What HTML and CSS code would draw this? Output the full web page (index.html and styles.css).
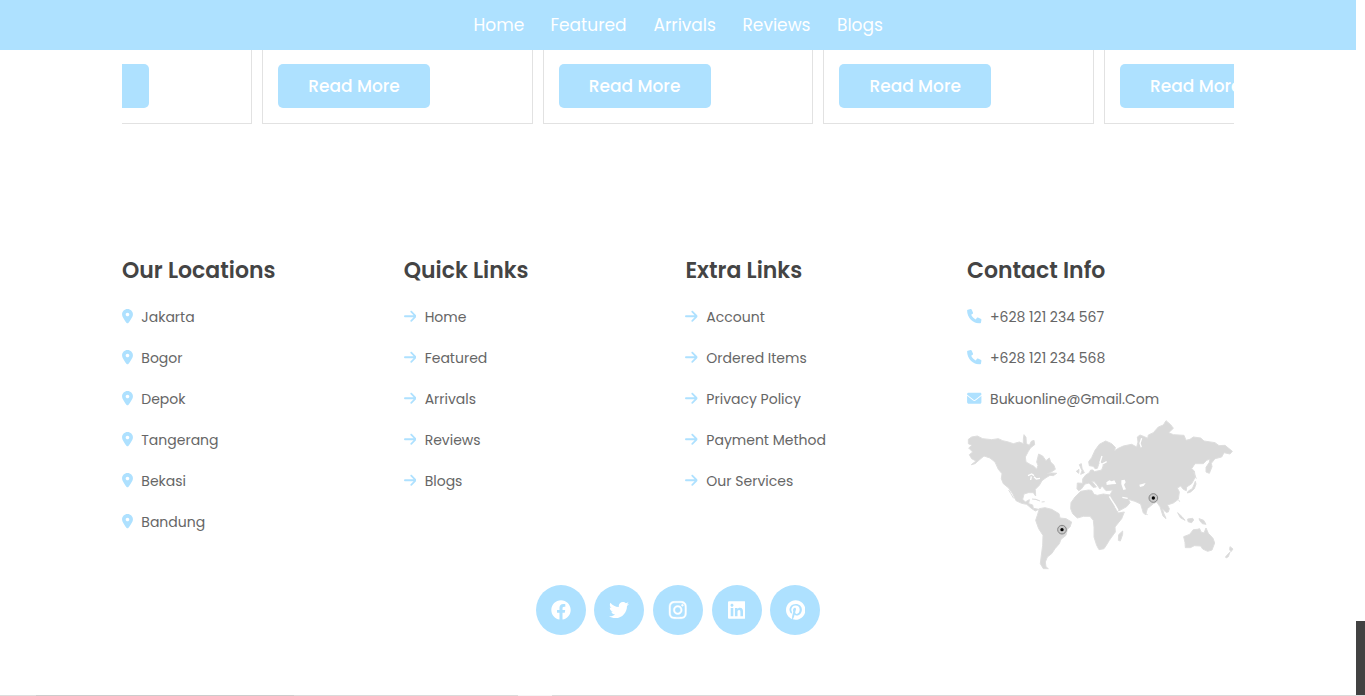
FILE: index.html
```html
<!DOCTYPE html>
<html lang="en">
<head>
<meta charset="utf-8">
<title>Bukuonline</title>
<link rel="stylesheet" href="styles.css">
</head>
<body>
<svg class="sprite" aria-hidden="true">
  <symbol id="pin" viewBox="0 0 384 512"><path d="M168.3 499.2C116.1 435 0 279.4 0 192C0 85.96 85.96 0 192 0C298 0 384 85.96 384 192C384 279.4 267 435 215.7 499.2C203.4 514.5 180.6 514.5 168.3 499.2zM192 256C227.3 256 256 227.3 256 192C256 156.7 227.3 128 192 128C156.7 128 128 156.7 128 192C128 227.3 156.7 256 192 256z"/></symbol>
  <symbol id="arrow" viewBox="0 0 448 512"><path d="M438.6 278.6l-160 160C272.4 444.9 264.2 448 256 448s-16.38-3.125-22.62-9.375c-12.5-12.5-12.5-32.75 0-45.25L338.8 288H32C14.33 288 0 273.7 0 256S14.33 224 32 224h306.8l-105.4-105.4c-12.5-12.5-12.5-32.75 0-45.25s32.75-12.5 45.25 0l160 160C451.1 245.9 451.1 266.1 438.6 278.6z"/></symbol>
  <symbol id="phone" viewBox="0 0 512 512"><path d="M511.2 387l-23.25 100.8c-3.266 14.25-15.79 24.22-30.46 24.22C205.2 512 0 306.8 0 54.5c0-14.66 9.969-27.2 24.22-30.45l100.8-23.25C139.7-2.602 154.7 5.018 160.8 18.92l46.52 108.5c5.438 12.78 1.77 27.67-8.98 36.45L144.5 207.1c33.98 69.22 90.26 125.5 159.5 159.5l44.08-53.8c8.688-10.78 23.69-14.51 36.47-8.975l108.5 46.51C506.1 357.2 514.6 372.4 511.2 387z"/></symbol>
  <symbol id="mail" viewBox="0 0 512 512"><path d="M256 352C239.5 352 223.5 346.5 210.5 336.1L0 167.1V384C0 419.3 28.65 448 64 448H448C483.3 448 512 419.3 512 384V167.1L301.5 336C288.5 346.5 272.5 352 256 352zM16.29 145.3L230.5 311.2C245.5 322.9 266.5 322.9 281.5 311.2L495.7 145.3C506 137.3 512 125 512 112C512 85.5 490.5 64 464 64H48C21.5 64 0 85.5 0 112C0 125 6 137.3 16.29 145.3z"/></symbol>
</svg>

<header class="navbar">
  <nav class="nav">
    <a>Home</a><a>Featured</a><a>Arrivals</a><a>Reviews</a><a>Blogs</a>
  </nav>
</header>

<section class="blogs">
  <div class="track">
    <article class="card"><a class="btn"></a></article>
    <article class="card"><a class="btn">Read More</a></article>
    <article class="card"><a class="btn">Read More</a></article>
    <article class="card"><a class="btn">Read More</a></article>
    <article class="card"><a class="btn">Read More</a></article>
  </div>
</section>

<footer class="footer">
  <div class="columns">
    <div class="col locations">
      <h3>Our Locations</h3>
      <a><svg class="w-pin"><use href="#pin"/></svg>Jakarta</a>
      <a><svg class="w-pin"><use href="#pin"/></svg>Bogor</a>
      <a><svg class="w-pin"><use href="#pin"/></svg>Depok</a>
      <a><svg class="w-pin"><use href="#pin"/></svg>Tangerang</a>
      <a><svg class="w-pin"><use href="#pin"/></svg>Bekasi</a>
      <a><svg class="w-pin"><use href="#pin"/></svg>Bandung</a>
    </div>
    <div class="col quick">
      <h3>Quick Links</h3>
      <a><svg class="w-arrow"><use href="#arrow"/></svg>Home</a>
      <a><svg class="w-arrow"><use href="#arrow"/></svg>Featured</a>
      <a><svg class="w-arrow"><use href="#arrow"/></svg>Arrivals</a>
      <a><svg class="w-arrow"><use href="#arrow"/></svg>Reviews</a>
      <a><svg class="w-arrow"><use href="#arrow"/></svg>Blogs</a>
    </div>
    <div class="col extra">
      <h3>Extra Links</h3>
      <a><svg class="w-arrow"><use href="#arrow"/></svg>Account</a>
      <a><svg class="w-arrow"><use href="#arrow"/></svg>Ordered Items</a>
      <a><svg class="w-arrow"><use href="#arrow"/></svg>Privacy Policy</a>
      <a><svg class="w-arrow"><use href="#arrow"/></svg>Payment Method</a>
      <a><svg class="w-arrow"><use href="#arrow"/></svg>Our Services</a>
    </div>
    <div class="col contact">
      <h3>Contact Info</h3>
      <a><svg class="w-phone"><use href="#phone"/></svg>+628 121 234 567</a>
      <a><svg class="w-phone"><use href="#phone"/></svg>+628 121 234 568</a>
      <a><svg class="w-phone"><use href="#mail"/></svg>Bukuonline@Gmail.Com</a>
      <svg class="map" viewBox="21 24 801 450">
        <g class="land">
          <path d="M25 82L35 75L52 72L68 80L95 83L115 80L128 86L145 90L160 95L178 90L190 95L190 82L192 68L198 76L199 95L208 100L214 88L222 85L224 98L212 107L205 118L196 135L198 150L212 158L222 163L230 172L234 160L230 150L236 126L248 132L258 146L268 138L272 150L282 160L286 172L275 179L262 185L275 183L290 184L280 191L270 190L258 197L246 206L238 220L226 232L227 252L220 242L205 242L192 246L188 262L196 270L208 263L206 275L218 279L220 289L236 292L226 297L214 289L200 277L185 274L168 266L158 245L146 228L130 215L124 200L126 185L115 172L105 150L90 138L72 132L60 142L45 155L34 158L48 147L35 140L28 128L38 120L26 108L36 100L25 95Z"/>
          <path d="M146 234L152 244L161 259M216 261L228 262L240 267M245 270L254 269"/>
          <path d="M238 290L255 287L275 292L297 305L300 318L318 320L335 330L330 345L322 352L318 370L303 382L298 395L285 410L275 425L262 435L256 450L258 465L265 470L250 470L241 455L244 430L248 400L249 370L236 350L227 325L232 310Z"/>
          <path d="M362 238L385 234L395 235L402 247L412 250L430 246L450 249L458 268L465 287L475 303L493 300L485 320L465 345L466 360L455 375L448 385L440 398L432 410L417 413L410 400L402 375L402 345L400 325L390 313L370 313L352 318L338 305L332 290L333 272L345 255Z"/>
          <path d="M476 368L488 357L488 367L481 387L475 385Z"/>
          <path d="M352 213L368 214L368 201L376 190L388 182L392 174L398 174L404 179L425 174L430 160L424 156L420 148L416 157L412 169L405 170L400 163L388 161L386 149L395 137L405 115L418 97L437 87L455 95L466 106L464 116L475 109L490 102L515 97L530 105L534 90L532 75L540 69L553 74L563 79L565 69L580 62L595 45L610 39L618 26L632 38L640 49L626 62L640 68L672 70L678 85L690 82L700 75L722 78L732 87L765 92L777 101L795 100L817 118L810 126L792 122L785 135L765 140L754 154L756 164L748 184L738 180L738 166L748 151L750 141L740 145L730 155L705 155L695 170L703 177L706 195L695 215L680 225L679 236L670 232L662 222L652 228L658 240L655 262L640 273L622 279L628 290L625 300L618 301L607 290L612 306L618 319L609 312L600 284L590 270L580 275L562 290L557 308L550 303L542 276L525 268L505 262L510 272L500 284L476 297L468 283L456 262L450 249L458 234L438 236L431 228L426 221L420 231L411 218L402 208L395 207L409 225L399 226L387 213L375 216L364 231L356 236L351 230Z"/>
          <path d="M358 158L364 155L366 169L373 182L362 187L366 176ZM349 178L357 172L356 184Z"/>
          <path d="M706 208L708 216L703 230L692 240L682 243L685 237L697 230L702 218Z"/>
          <path d="M700 180L709 200M656 264L659 269M608 304L617 320M653 302L666 314L675 325L661 317ZM683 321L698 319L701 324L695 332L684 329ZM717 320L731 325L738 337L727 335L720 327ZM558 306L563 308"/>
          <path d="M671 374L689 367L700 353L712 352L719 350L723 360L732 363L738 348L745 364L759 379L764 393L756 414L743 418L728 411L722 402L703 401L691 407L676 407L675 391Z"/>
          <path d="M810 404L819 411L813 419L809 413ZM797 434L810 420L805 434L798 438Z"/>
        </g>
        <g class="water">
          <path d="M439 211L448 205L455 208L463 205L469 216L456 217L440 219ZM484 205L494 203L497 211L492 218L498 232L490 234L484 217ZM538 218L557 213L551 222L540 225Z"/>
          <path d="M448 253L456 266L466 281L474 295M204 191L215 186L222 191M214 193L212 204M222 194L229 201L240 199M426 132L420 151L425 157L440 149M545 79L540 94L544 106M503 259L487 256"/>
        </g>
        <g class="marker"><circle class="ring" cx="306" cy="353" r="13"/><circle class="dot" cx="306" cy="353" r="5"/></g>
        <g class="marker"><circle class="ring" cx="580" cy="258" r="13"/><circle class="dot" cx="580" cy="258" r="5"/></g>
      </svg>
    </div>
  </div>
  <div class="social">
    <a><svg viewBox="0 0 512 512"><path d="M504 256C504 119 393 8 256 8S8 119 8 256c0 123.78 90.69 226.38 209.25 245V327.69h-63V256h63v-54.64c0-62.15 37-96.48 93.67-96.48 27.14 0 55.52 4.84 55.52 4.84v61h-31.28c-30.8 0-40.41 19.12-40.41 38.73V256h68.78l-11 71.69h-57.78V501C413.31 482.38 504 379.78 504 256z"/></svg></a>
    <a><svg viewBox="0 0 512 512"><path d="M459.37 151.716c.325 4.548.325 9.097.325 13.645 0 138.72-105.583 298.558-298.558 298.558-59.452 0-114.68-17.219-161.137-47.106 8.447.974 16.568 1.299 25.34 1.299 49.055 0 94.213-16.568 130.274-44.832-46.132-.975-84.792-31.188-98.112-72.772 6.498.974 12.995 1.624 19.818 1.624 9.421 0 18.843-1.3 27.614-3.573-48.081-9.747-84.143-51.98-84.143-102.985v-1.299c13.969 7.797 30.214 12.67 47.431 13.319-28.264-18.843-46.781-51.005-46.781-87.391 0-19.492 5.197-37.36 14.294-52.954 51.655 63.675 129.3 105.258 216.365 109.807-1.624-7.797-2.599-15.918-2.599-24.04 0-57.828 46.782-104.934 104.934-104.934 30.213 0 57.502 12.67 76.67 33.137 23.715-4.548 46.456-13.32 66.599-25.34-7.798 24.366-24.366 44.833-46.132 57.827 21.117-2.273 41.584-8.122 60.426-16.243-14.292 20.791-32.161 39.308-52.628 54.253z"/></svg></a>
    <a><svg class="bold" viewBox="0 0 448 512"><path d="M224.1 141c-63.6 0-114.9 51.3-114.9 114.9s51.3 114.9 114.9 114.9S339 319.5 339 255.9 287.7 141 224.1 141zm0 189.6c-41.1 0-74.7-33.5-74.7-74.7s33.5-74.7 74.7-74.7 74.7 33.5 74.7 74.7-33.6 74.7-74.7 74.7zm146.4-194.3c0 14.9-12 26.8-26.8 26.8-14.9 0-26.8-12-26.8-26.8s12-26.8 26.8-26.8 26.8 12 26.8 26.8zm76.1 27.2c-1.7-35.9-9.9-67.7-36.2-93.9-26.2-26.2-58-34.4-93.9-36.2-37-2.1-147.9-2.1-184.9 0-35.8 1.7-67.6 9.9-93.9 36.1s-34.4 58-36.2 93.9c-2.1 37-2.1 147.9 0 184.9 1.7 35.9 9.9 67.7 36.2 93.9s58 34.4 93.9 36.2c37 2.1 147.9 2.1 184.9 0 35.9-1.7 67.7-9.9 93.9-36.2 26.2-26.2 34.4-58 36.2-93.9 2.1-37 2.1-147.8 0-184.8zM398.8 388c-7.8 19.6-22.9 34.7-42.6 42.6-29.5 11.7-99.5 9-132.1 9s-102.7 2.6-132.1-9c-19.6-7.8-34.7-22.9-42.6-42.6-11.7-29.5-9-99.5-9-132.1s-2.6-102.7 9-132.1c7.8-19.6 22.9-34.7 42.6-42.6 29.5-11.7 99.5-9 132.1-9s102.7-2.6 132.1 9c19.6 7.8 34.7 22.9 42.6 42.6 11.7 29.5 9 99.5 9 132.1s2.7 102.7-9 132.1z"/></svg></a>
    <a><svg viewBox="0 0 448 512"><path d="M416 32H31.9C14.3 32 0 46.5 0 64.3v383.4C0 465.5 14.3 480 31.9 480H416c17.6 0 32-14.5 32-32.3V64.3c0-17.8-14.4-32.3-32-32.3zM135.4 416H69V202.2h66.5V416zm-33.2-243c-21.3 0-38.5-17.3-38.5-38.5S80.9 96 102.2 96c21.2 0 38.5 17.3 38.5 38.5 0 21.3-17.2 38.5-38.5 38.5zm282.1 243h-66.4V312c0-24.8-.5-56.7-34.5-56.7-34.6 0-39.9 27-39.9 54.9V416h-66.4V202.2h63.7v29.2h.9c8.9-16.8 30.6-34.5 62.9-34.5 67.2 0 79.7 44.3 79.7 101.9V416z"/></svg></a>
    <a><svg viewBox="0 0 496 512"><path d="M496 256c0 137-111 248-248 248-25.6 0-50.2-3.9-73.4-11.1 10.1-16.5 25.2-43.5 30.8-65 3-11.6 15.4-59 15.4-59 8.1 15.4 31.7 28.5 56.8 28.5 74.8 0 128.7-68.8 128.7-154.3 0-81.9-66.9-143.2-152.9-143.2-107 0-163.9 71.8-163.9 150.1 0 36.4 19.4 81.7 50.3 96.1 4.7 2.2 7.2 1.2 8.3-3.3.8-3.4 5-20.3 6.9-28.1.6-2.5.3-4.7-1.7-7.1-10.1-12.5-18.3-35.3-18.3-56.6 0-54.7 41.4-107.6 112-107.6 60.9 0 103.6 41.5 103.6 100.9 0 67.1-33.9 113.6-78 113.6-24.3 0-42.6-20.1-36.7-44.8 7-29.5 20.5-61.3 20.5-82.6 0-19-10.2-34.9-31.4-34.9-24.9 0-44.9 25.7-44.9 60.2 0 22 7.4 36.8 7.4 36.8s-24.5 103.8-29 123.2c-5 21.4-3 51.6-.9 71.2C65.4 450.9 0 361.1 0 256 0 119 111 8 248 8s248 111 248 248z"/></svg></a>
  </div>
  <div class="rule"></div>
</footer>
<div class="scroll-thumb"></div>
</body>
</html>
```
FILE: styles.css
```css
* { box-sizing: border-box; }
body {
  margin: 0;
  height: 696px;
  overflow: hidden;
  background: #fff;
  font-family: Poppins, Inter, "Open Sans", sans-serif;
}
.sprite { display: none; }
.navbar { width: 1356px; height: 50px; background: #aee1ff; }
.nav {
  display: grid;
  grid-template-columns: 77px 103px 89px 94.5px 48px;
  padding-left: 473.5px;
  line-height: 50px;
  font-size: 17px;
  color: #fff;
  white-space: nowrap;
}
.blogs { height: 74px; margin: 0 131px 0 122px; overflow: hidden; }
.track { display: flex; gap: 10px; margin-left: -140.6px; }
.card {
  flex: 0 0 270.6px;
  height: 74px;
  padding: 14px 15px;
  border: 1px solid #e2e2e2;
  border-top: 0;
}
.btn {
  display: block;
  width: 152px;
  height: 44px;
  border-radius: 5px;
  background: #aee1ff;
  color: #fff;
  font-size: 17px;
  font-weight: 500;
  line-height: 44px;
  text-align: center;
  white-space: nowrap;
}
.footer { height: 572px; padding-top: 131px; display: flex; flex-direction: column; }
.columns {
  display: grid;
  grid-template-columns: repeat(4, 266.7px);
  column-gap: 15px;
  height: 330px;
  margin-left: 122px;
}
.col h3 {
  margin: 0 0 11px;
  font-size: 22px;
  font-weight: 600;
  line-height: 31px;
  color: #444;
}
.col a {
  display: flex;
  align-items: center;
  height: 41px;
  font-size: 14px;
  color: #666;
  white-space: nowrap;
}
.col a svg { height: 14.5px; margin: 0 8.3px 2px 0; fill: #aee1ff; }
.w-pin { width: 11px; }
.w-arrow { width: 12.7px; }
.col .w-phone { width: 14.7px; }
.map { display: block; width: 267px; height: 150px; }
.land { fill: #d9d9d9; stroke: #dedede; stroke-width: 3; stroke-linejoin: round; }
.water { fill: #fff; }
.water path + path { fill: none; stroke: #fff; stroke-width: 4; }
.marker .ring { fill: #c8c8c8; stroke: #777; stroke-width: 2.5; }
.marker .dot { fill: #000; }
.social { display: flex; justify-content: center; gap: 8.6px; width: 1356px; }
.social a {
  display: flex;
  align-items: center;
  justify-content: center;
  width: 50px;
  height: 50px;
  border-radius: 50%;
  background: #aee1ff;
}
.social svg { height: 20px; margin-bottom: 1px; fill: #fff; }
.social .bold { stroke: #fff; stroke-width: 10; overflow: visible; }
.rule {
  height: 1px;
  margin-top: auto;
  background: linear-gradient(90deg, #ddd 36px, #ccc 36px 294px, #dadada 294px 518px, #f4f4f4 518px 552px, #dadada 552px);
}
.scroll-thumb { position: fixed; right: 0; top: 621px; width: 9px; height: 74px; background: #424242; }
```
